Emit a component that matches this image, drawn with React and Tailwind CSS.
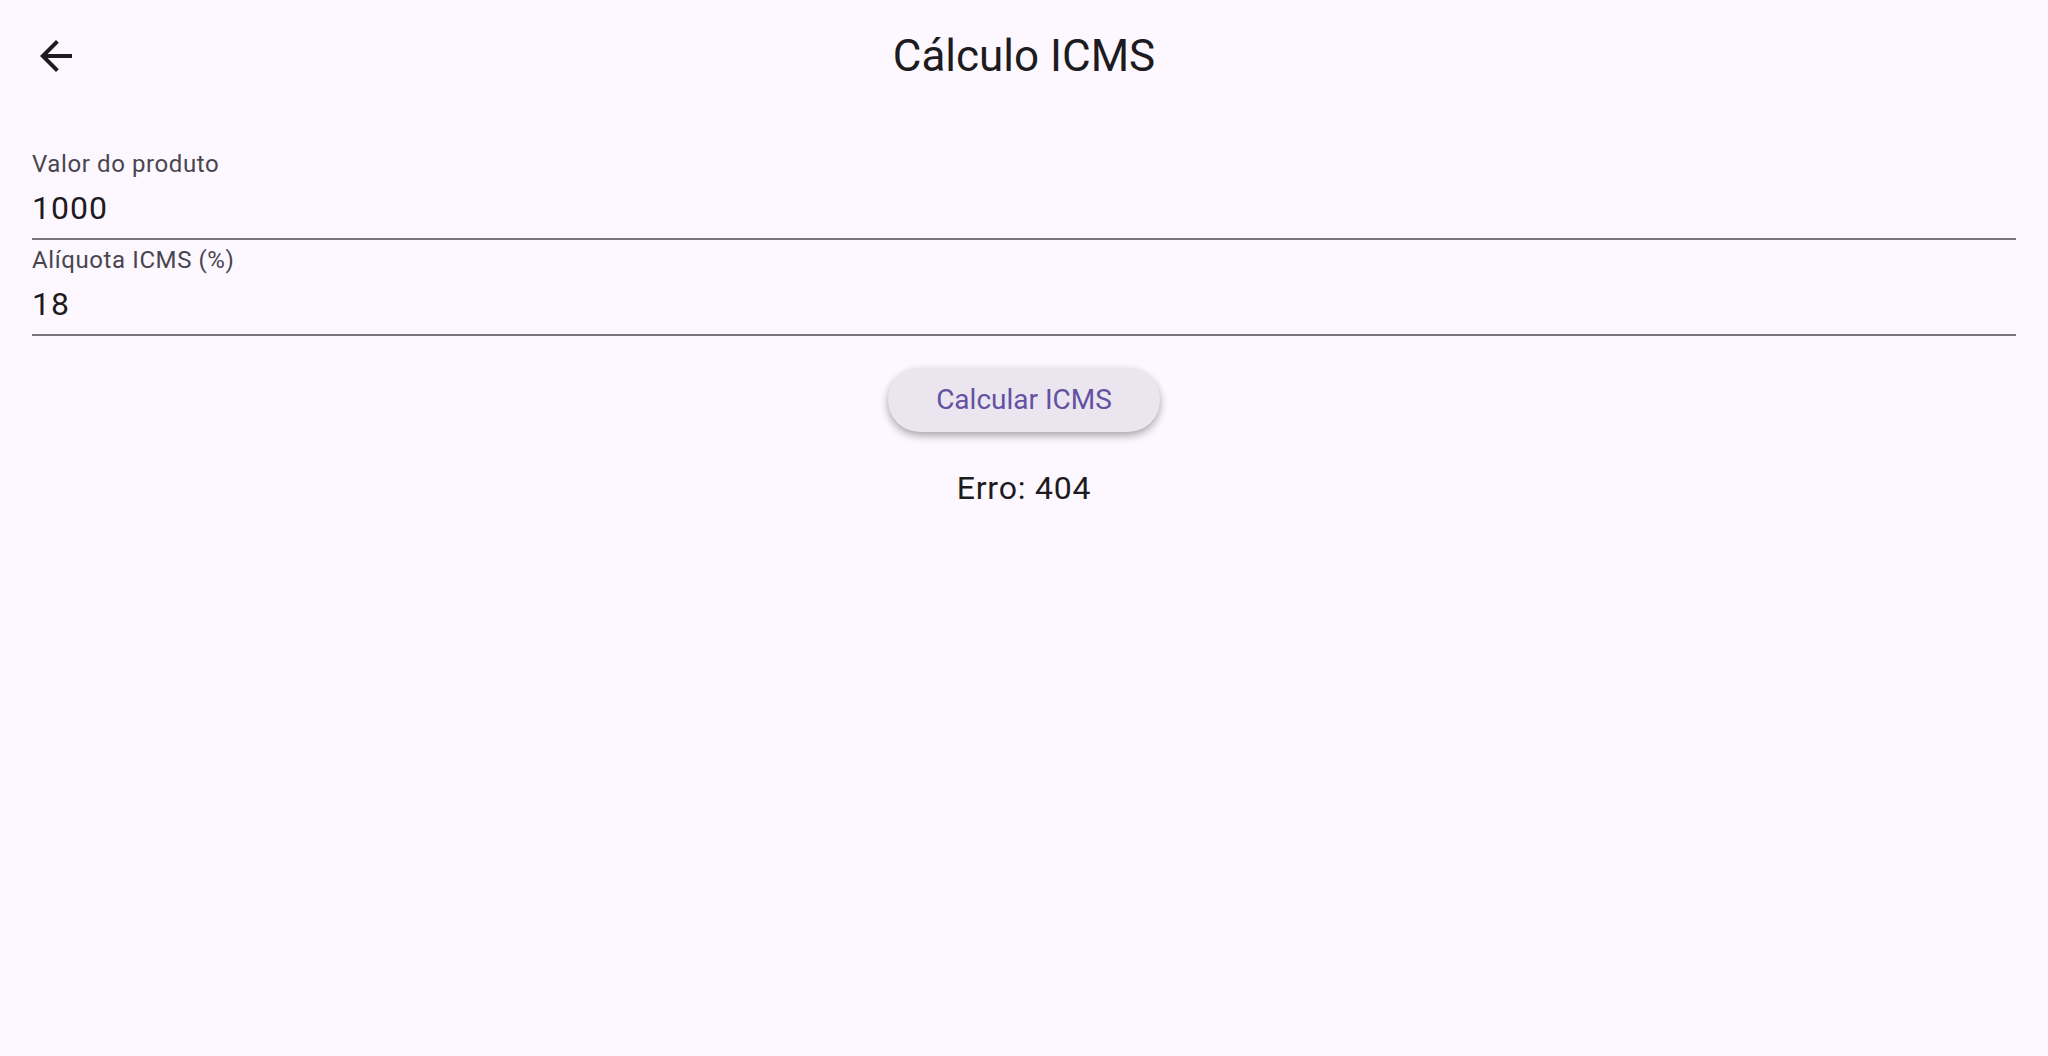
function Field({ id, label, value }) {
  return (
    <div className="flex h-24 flex-col border-b-2 border-[#79747e] pt-1">
      <label htmlFor={id} className="text-2xl leading-8 tracking-wide text-[#49454f]">{label}</label>
      <input id={id} inputMode="numeric" defaultValue={value} className="mt-2 h-10 w-full bg-transparent text-[32px] leading-10 tracking-[1px] text-[#1d1b20] outline-none" />
    </div>
  );
}

export default function App() {
  return (
    <div className="min-h-screen bg-[#fdf8ff] font-['Roboto',sans-serif] text-[#1d1b20]">
      <header className="grid h-28 grid-cols-[1fr_auto_1fr] items-center px-8">
        <button type="button" aria-label="Voltar" className="flex size-12 items-center justify-center">
          <svg viewBox="0 0 24 24" className="size-12" fill="currentColor"><path d="M20 11H7.83l5.59-5.59L12 4l-8 8 8 8 1.41-1.41L7.83 13H20v-2z" /></svg>
        </button>
        <h1 className="text-[44px] leading-14">Cálculo ICMS</h1>
      </header>
      <main className="flex flex-col px-8 pt-8">
        <Field id="valor" label="Valor do produto" value="1000" />
        <Field id="aliquota" label="Alíquota ICMS (%)" value="18" />
        <button type="button" className="mt-8 h-16 self-center rounded-full bg-[#ebe5f0] px-12 text-[28px] text-[#6351a2] shadow-[0_4px_8px_rgb(0_0_0/0.30),0_1px_6px_rgb(0_0_0/0.06)]">Calcular ICMS</button>
        <p className="mt-8 text-center text-[32px] leading-12 tracking-wide">Erro: 404</p>
      </main>
    </div>
  );
}
